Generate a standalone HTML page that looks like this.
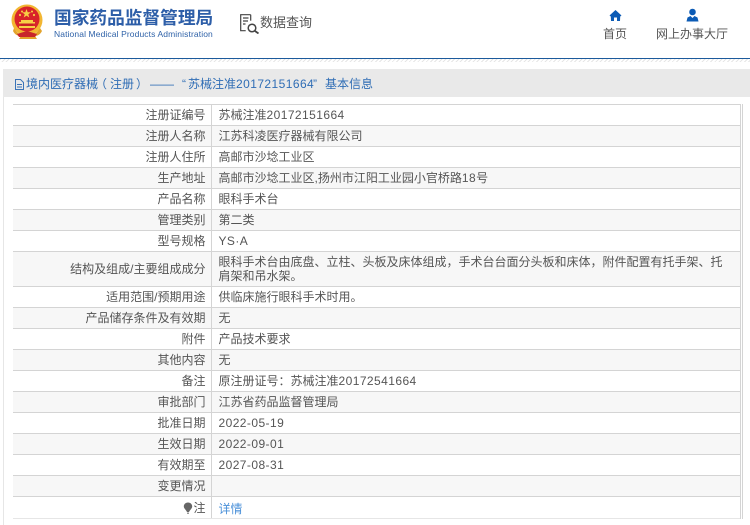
<!DOCTYPE html>
<html lang="zh-CN">
<head>
<meta charset="utf-8">
<title>苏械注准20172151664</title>
<style>
html,body{margin:0;padding:0;background:#fff;}
body{width:750px;height:525px;overflow:hidden;position:relative;font-family:"Liberation Sans","Noto Sans CJK SC",sans-serif;font-size:12px;color:#555;}
.a{position:absolute;white-space:nowrap;}
.n{letter-spacing:.43px;}
table{position:absolute;left:13px;top:104px;width:727px;border-collapse:collapse;table-layout:fixed;border-top:1px solid #d4d4d4;}
td{padding:0;border-bottom:1px solid #d4d4d4;height:20px;line-height:14px;vertical-align:middle;}
td.l{width:198px;text-align:right;padding-right:5px;border-right:1px solid #d4d4d4;box-sizing:border-box;}
td.v{padding-left:7px;padding-right:17px;}
tr:nth-child(even) td{background:#f7f7f7;}
.b{line-height:16px;top:76px;color:#2f6db5;}
</style>
</head>
<body>
<svg class="a" style="left:11px;top:3px" width="34" height="36" viewBox="0 0 34 36">
<circle cx="16" cy="17" r="15.500" fill="#f2b632"/>
<circle cx="16" cy="16" r="12.500" fill="#d8232a"/>
<polygon points="15.500,6 16.700,9.300 20,9.300 17.300,11.300 18.300,14.500 15.500,12.600 12.700,14.500 13.700,11.300 11,9.300 14.300,9.300" fill="#f7cf45"/>
<circle cx="9" cy="12" r="1.100" fill="#f7cf45"/><circle cx="11" cy="8.500" r="1" fill="#f7cf45"/><circle cx="21" cy="8.500" r="1" fill="#f7cf45"/><circle cx="23" cy="12" r="1.100" fill="#f7cf45"/>
<path d="M8 19h16v1.500H8zM10 17h12v2H10zM8 23h16v2H8z" fill="#f7cf45"/>
<path d="M10 20.500h12V23H10z" fill="#c81f26"/>
<path d="M3 25c3 5 7 8 13 8s10-3 13-8l2 3c-2 4-5 5-7 5l2 3H8l2-3c-3 0-6-1-8-5z" fill="#e3a32b"/>
<path d="M6 31l10-3 10 3-2 3H8z" fill="#c8262b"/>
</svg>
<div class="a" style="left:54px;top:6px;font-size:17.700px;line-height:24px;font-weight:bold;color:#2d5ea8">国家药品监督管理局</div>
<div class="a" style="left:54px;top:28px;font-size:8.500px;line-height:12px;color:#2f62a8;letter-spacing:.11px">National Medical Products Administration</div>
<svg class="a" style="left:239px;top:13px" width="22" height="21" viewBox="0 0 22 21" fill="none" stroke="#444" stroke-width="1.200">
<path d="M11.700 1.700H1.700v16h5"/>
<path d="M11.700 1.700v6"/>
<path d="M4 5h5.500M4 8h5M4 11h2.500"/>
<circle cx="13" cy="15" r="3.800" stroke-width="1.500"/>
<path d="M16 18l3.500 2.500" stroke-width="1.800"/>
</svg>
<div class="a" style="left:260px;top:14px;font-size:13px;line-height:18px;color:#555">数据查询</div>
<svg class="a" style="left:609px;top:9px" width="13" height="13" viewBox="0 0 13 13"><path d="M6.500 1L0.500 6.500 1.800 7.500 2 12H5V8.500H8V12H11L11.200 7.500 12.500 6.500Z" fill="#0c5bb5"/></svg>
<svg class="a" style="left:686px;top:8px" width="13" height="14" viewBox="0 0 13 14"><circle cx="6.500" cy="4" r="3.300" fill="#0c5bb5"/><path d="M0.500 13.500L1.500 9.500 4.500 8 6.500 10 8.500 8 11.500 9.500 12.500 13.500Z" fill="#0c5bb5"/></svg>
<div class="a" style="left:603px;top:26px;line-height:17px;color:#555">首页</div>
<div class="a" style="left:656px;top:26px;line-height:17px;color:#555">网上办事大厅</div>
<div class="a" style="left:0;top:58px;width:750px;height:1px;background:#1c5a9c"></div>
<div class="a" style="left:0;top:59px;width:750px;height:3px;background:repeating-linear-gradient(135deg,#e6e6e6 0 1px,#fff 1px 3px)"></div>
<div class="a" style="left:3px;top:69px;width:747px;height:28px;background:#e9e9e9"></div>
<div class="a" style="left:3px;top:97px;width:1px;height:428px;background:#e6e6e6"></div>
<svg class="a" style="left:14px;top:78px" width="11" height="13" viewBox="0 0 11 13" fill="none" stroke="#3b74b8"><path d="M1.500 1.500h5l3 3v7h-8zM3 6.500h5M3 9h5"/></svg>
<div class="a b" style="left:26px">境内医疗器械</div>
<div class="a b" style="left:95px">（</div>
<div class="a b" style="left:110px">注册</div>
<div class="a b" style="left:136px">）</div>
<div class="a b" style="left:150px">——</div>
<div class="a b" style="left:182px">“</div>
<div class="a b" style="left:188px">苏械注准<span class="n">20172151664</span></div>
<div class="a b" style="left:313px">”</div>
<div class="a b" style="left:325px">基本信息</div>
<table>
<tr><td class="l">注册证编号</td><td class="v">苏械注准<span class="n">20172151664</span></td></tr>
<tr><td class="l">注册人名称</td><td class="v">江苏科凌医疗器械有限公司</td></tr>
<tr><td class="l">注册人住所</td><td class="v">高邮市沙埝工业区</td></tr>
<tr><td class="l">生产地址</td><td class="v">高邮市沙埝工业区,扬州市江阳工业园小官桥路<span class="n">18</span>号</td></tr>
<tr><td class="l">产品名称</td><td class="v">眼科手术台</td></tr>
<tr><td class="l">管理类别</td><td class="v">第二类</td></tr>
<tr><td class="l">型号规格</td><td class="v"><span class="n">YS·A</span></td></tr>
<tr><td class="l" style="height:34px">结构及组成/主要组成成分</td><td class="v" style="height:34px;white-space:normal">眼科手术台由底盘、立柱、头板及床体组成，手术台台面分头板和床体，附件配置有托手架、托肩架和吊水架。</td></tr>
<tr><td class="l">适用范围/预期用途</td><td class="v">供临床施行眼科手术时用。</td></tr>
<tr><td class="l">产品储存条件及有效期</td><td class="v">无</td></tr>
<tr><td class="l">附件</td><td class="v">产品技术要求</td></tr>
<tr><td class="l">其他内容</td><td class="v">无</td></tr>
<tr><td class="l">备注</td><td class="v">原注册证号：苏械注准<span class="n">20172541664</span></td></tr>
<tr><td class="l">审批部门</td><td class="v">江苏省药品监督管理局</td></tr>
<tr><td class="l">批准日期</td><td class="v"><span class="n">2022-05-19</span></td></tr>
<tr><td class="l">生效日期</td><td class="v"><span class="n">2022-09-01</span></td></tr>
<tr><td class="l">有效期至</td><td class="v"><span class="n">2027-08-31</span></td></tr>
<tr><td class="l">变更情况</td><td class="v"></td></tr>
<tr style="background:#fff"><td class="l" style="height:22px;background:#fff;border-bottom-color:#e6e6e6"><svg width="10" height="12" viewBox="0 0 10 12" style="vertical-align:-2px"><path d="M5 0.500C2.300 0.500 0.800 2.500 0.800 4.500c0 2 2.200 3.300 3.200 5.500h2C7 7.800 9.200 6.500 9.200 4.500 9.200 2.500 7.700 0.500 5 0.500Z" fill="#666"/><path d="M4 10.500h2V12H4z" fill="#999"/></svg>注</td><td class="v" style="height:22px;background:#fff;border-bottom-color:#e6e6e6;color:#4a90d9;padding-top:2px;box-sizing:border-box">详情</td></tr>
</table>
<div class="a" style="left:740px;top:104px;width:1px;height:415px;background:#d4d4d4"></div>
<div class="a" style="left:742px;top:104px;width:1px;height:415px;background:#d4d4d4"></div>
</body>
</html>
